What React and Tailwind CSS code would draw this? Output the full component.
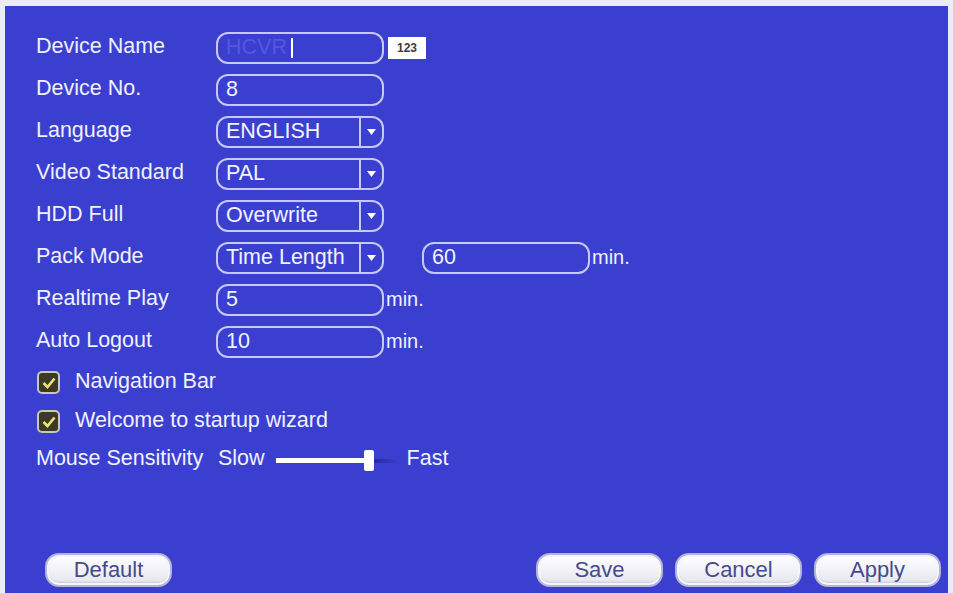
import { useState } from "react";

const font = { fontFamily: '"Liberation Sans", Arial, sans-serif' };

function Box({ children, width = "w-[168px]" }) {
  return (
    <div
      className={`${width} h-[32px] shrink-0 flex items-center rounded-[12px] border-2 border-[#c6c8f6] pl-[8px] text-[21.5px] leading-none text-[#f2f3ff]`}
    >
      {children}
    </div>
  );
}

function Select({ value }) {
  return (
    <div className="w-[168px] h-[32px] shrink-0 flex items-center rounded-[12px] border-2 border-[#c6c8f6] text-[21.5px] leading-none text-[#f2f3ff]">
      <span className="flex-1 pl-[8px] whitespace-nowrap">{value}</span>
      <span className="h-full w-[2px] bg-[#c6c8f6]" />
      <span className="w-[21px] flex justify-center">
        <svg width="9" height="6" viewBox="0 0 9 6">
          <path d="M0 0 L9 0 L4.5 6 Z" fill="#ffffff" />
        </svg>
      </span>
    </div>
  );
}

function Row({ label, children }) {
  return (
    <div className="h-[42px] flex items-center">
      <span className="w-[180px] shrink-0 pb-[3px] text-[21.5px] leading-none text-[#f0f1ff] whitespace-nowrap">
        {label}
      </span>
      {children}
    </div>
  );
}

function Min() {
  return <span className="pl-[2px] pb-[3px] text-[20px] leading-none text-[#f0f1ff]">min.</span>;
}

function Check({ label }) {
  return (
    <div className="h-[39px] flex items-center pl-[1px]">
      <span className="w-[23px] h-[23px] rounded-[5px] border-2 border-[#c9c8b6] bg-[#3c3a26] flex items-center justify-center">
        <svg width="14" height="12" viewBox="0 0 14 12">
          <path d="M1.5 6 L5.5 10 L12.5 1.5" fill="none" stroke="#efe17a" strokeWidth="2.6" />
        </svg>
      </span>
      <span className="ml-[15px] pb-[2px] text-[21.5px] leading-none text-[#f0f1ff] whitespace-nowrap">
        {label}
      </span>
    </div>
  );
}

function Button({ children }) {
  return (
    <button className="w-[127px] h-[34px] rounded-[14px] border-2 border-[#b3b5d8] bg-gradient-to-b from-[#ffffff] to-[#e4e5ee] shadow-[inset_0_0_0_2px_#f4f4fa,inset_0_-3px_2px_#c8c9d6] text-[22px] leading-none text-[#464a8c]">
      {children}
    </button>
  );
}

export default function App() {
  const [speed] = useState(88);

  return (
    <div style={font} className="w-[953px] h-[593px] bg-[#ececf7] pl-[5px] pt-[6px] pr-[5px] flex">
      <div className="flex-1 bg-[#3b3fcf] flex flex-col pl-[31px] pt-[21px] pb-[6px]">
        <Row label="Device Name">
          <Box>
            <span className="text-[#5458dc]">HCVR</span>
            <span className="ml-[4px] w-[2px] h-[20px] bg-white" />
          </Box>
          <span className="ml-[4px] w-[38px] h-[22px] bg-white flex items-center justify-center text-[12px] font-bold text-[#3a3a4a]">
            123
          </span>
        </Row>
        <Row label="Device No.">
          <Box>8</Box>
        </Row>
        <Row label="Language">
          <Select value="ENGLISH" />
        </Row>
        <Row label="Video Standard">
          <Select value="PAL" />
        </Row>
        <Row label="HDD Full">
          <Select value="Overwrite" />
        </Row>
        <Row label="Pack Mode">
          <Select value="Time Length" />
          <div className="ml-[38px] flex items-center">
            <Box>60</Box>
            <Min />
          </div>
        </Row>
        <Row label="Realtime Play">
          <Box>5</Box>
          <Min />
        </Row>
        <Row label="Auto Logout">
          <Box>10</Box>
          <Min />
        </Row>

        <Check label="Navigation Bar" />
        <Check label="Welcome to startup wizard" />

        <div className="h-[39px] flex items-center text-[21.5px] leading-none text-[#f0f1ff] whitespace-nowrap">
          <span className="w-[182px] shrink-0 pb-[3px]">Mouse Sensitivity</span>
          <span className="pb-[3px]">Slow</span>
          <div className="ml-[11px] w-[123px] h-[22px] flex items-center">
            <div className="h-[5px] bg-white" style={{ width: `${speed}px` }} />
            <div className="w-[10px] h-[21px] bg-white rounded-[2px]" />
            <div className="flex-1 h-[4px] bg-gradient-to-r from-[#262a9e] to-[#3b3fcf]" />
          </div>
          <span className="ml-[8px] pb-[3px]">Fast</span>
        </div>

        <div className="mt-auto flex items-center justify-between pl-[9px] pr-[7px]">
          <Button>Default</Button>
          <div className="flex gap-[12px]">
            <Button>Save</Button>
            <Button>Cancel</Button>
            <Button>Apply</Button>
          </div>
        </div>
      </div>
    </div>
  );
}
